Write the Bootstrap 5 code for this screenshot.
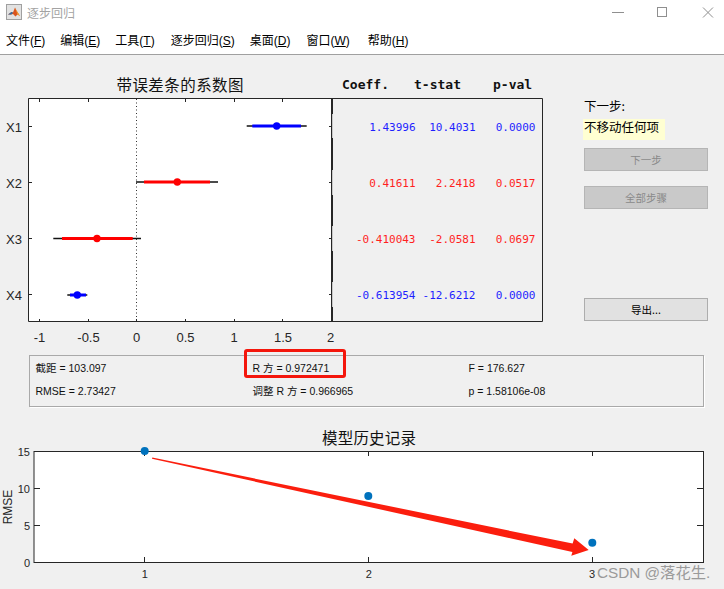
<!DOCTYPE html>
<html lang="zh">
<head>
<meta charset="utf-8">
<title>逐步回归</title>
<link href="https://cdn.jsdelivr.net/npm/bootstrap@5.3.0/dist/css/bootstrap.min.css" rel="stylesheet">
<style>
html,body{height:100%;}
body{margin:0;background:#f0f0f0;color:#000;font-family:"Liberation Sans","Noto Sans CJK SC",sans-serif;overflow:hidden;}
.win-title{height:31px;background:#fff;padding-left:6px;font-size:12px;color:#a3a3a3;font-family:"Noto Sans CJK SC",sans-serif;}
.win-icon{margin-top:4px;}
.win-name{line-height:17px;padding-top:4px;margin-left:5px;}
.win-ctls{margin-right:4px;}
.win-menu{height:24px;background:#fff;border-bottom:1px solid #a0a0a0;padding-left:6px;gap:15px;font-size:12px;font-family:"Liberation Sans","Noto Sans CJK SC",sans-serif;line-height:20px;}
.win-menu span u{text-underline-offset:1px;}
.win-menu .gap-a{margin-left:1px;}
.win-menu .gap-b{margin-left:3px;}
.work{position:relative;height:534px;}
.top-row{height:295px;}
.side{width:124px;margin-left:39px;padding-top:41px;font-family:"Noto Sans CJK SC",sans-serif;}
.next-lbl{font-size:12.5px;line-height:20px;height:23px;}
.next-val{font-size:12.5px;line-height:16px;background:#ffffd2;margin-left:-1px;padding-left:1px;width:82px;height:21px;margin-bottom:8px;}
.act{width:124px;height:23px;padding:0;font-size:10.5px;line-height:21px;border:1px solid #adadad;border-radius:0;background:#e1e1e1;color:#000;font-family:"Noto Sans CJK SC",sans-serif;}
.act.act-off,.act.act-off:disabled{background:#c9c9c9;color:#8a8a8a;border-color:#b5b5b5;opacity:1;margin-bottom:15px;}
.act-last{margin-top:74px;}
.stats{margin:5px 0 0 28.5px;width:675px;height:52px;border:1px solid #a9a9a9;box-shadow:1px 1px 0 #fff;display:grid;grid-template-columns:217px 216px 1fr;grid-auto-rows:23px;padding:0 0 3px 6px;align-content:center;font-size:10.5px;line-height:23px;color:#111;}
svg{display:block;}
svg text{font-family:"Liberation Sans",sans-serif;fill:#262626;}
svg .ttl{font-family:"Noto Sans CJK SC",sans-serif;font-size:15.5px;fill:#111;font-weight:400;}
svg .tick{font-size:13px;}
svg .tick2{font-size:11px;}
svg .hdr{font-family:"DejaVu Sans Mono",monospace;font-size:13px;font-weight:700;fill:#111;}
svg .val{font-family:"DejaVu Sans Mono",monospace;font-size:11px;}
svg .blu{fill:#1f1fff;}
svg .rd{fill:#ff1f1f;}
.mark-box{position:absolute;left:244px;top:294px;width:102px;height:29px;border:3px solid #f4160c;border-radius:3px;pointer-events:none;}
.wmark{position:absolute;left:597px;top:508px;font-size:15.3px;line-height:20px;color:#9a9a9a;white-space:nowrap;font-family:"Liberation Sans","Noto Sans CJK SC",sans-serif;}
</style>
</head>
<body>
<header class="win-title d-flex align-items-start">
  <svg width="16" height="16" viewBox="0 0 16 16" class="win-icon flex-shrink-0">
    <rect x=".5" y=".5" width="15" height="15" fill="#e2e2e2" stroke="#a0a0a0"/>
    <path d="M2 10.5 L5.5 8 L7 8.5 L9 3.5 L10.5 6.5 L14 12 L11.5 10.5 L9.5 12.5 L7 10 L5 10.5 Z" fill="#d9541e"/>
    <path d="M2 10.5 L5.5 8 L7 8.5 L6 10 L5 10.5 Z" fill="#2f6fa8"/>
    <path d="M9 3.5 L10.5 6.5 L14 12 L11.5 10.5 Z" fill="#f0a030"/>
  </svg>
  <span class="win-name flex-grow-1">逐步回归</span>
  <div class="win-ctls d-flex">
    <svg width="46" height="31" viewBox="0 0 46 31"><path d="M5 12.5H17" stroke="#8f8f8f"/></svg>
    <svg width="46" height="31" viewBox="0 0 46 31"><rect x="4.5" y="7.5" width="9" height="9" fill="none" stroke="#8f8f8f"/></svg>
    <svg width="21" height="31" viewBox="0 0 21 31"><path d="M4 7.5L14 17.5M14 7.5L4 17.5" stroke="#8f8f8f"/></svg>
  </div>
</header>
<nav class="win-menu d-flex align-items-start">
  <span>文件(<u>F</u>)</span><span>编辑(<u>E</u>)</span><span>工具(<u>T</u>)</span><span class="gap-a">逐步回归(<u>S</u>)</span><span>桌面(<u>D</u>)</span><span class="gap-a">窗口(<u>W</u>)</span><span class="gap-b">帮助(<u>H</u>)</span>
</nav>
<main class="work">
  <div class="top-row d-flex">
    <svg width="545" height="295" viewBox="0 55 545 295" class="flex-shrink-0">
      <text class="ttl" x="180" y="91" text-anchor="middle" textLength="127">带误差条的系数图</text>
      <text class="hdr" x="342" y="89">Coeff.</text>
      <text class="hdr" x="414" y="89">t-stat</text>
      <text class="hdr" x="493" y="89">p-val</text>
      <rect x="28.5" y="98.5" width="303.5" height="223" fill="#fff"/>
      <path d="M136.5 99V322" stroke="#333" stroke-dasharray="1 2.5"/>
      <g stroke="#262626" fill="none">
        <path d="M39.5 99v3M88.5 99v3M185.5 99v3M234.5 99v3M282.5 99v3"/>
        <path d="M39.5 322v-3M88.5 322v-3M136.5 322v-3M185.5 322v-3M234.5 322v-3M282.5 322v-3"/>
        <path d="M29 126.5h3M29 182.5h3M29 238.5h3M29 294.5h3M332 126.5h-3M332 182.5h-3M332 238.5h-3M332 294.5h-3"/>
        <path d="M28.5 98.5H542.5V321.5H28.5Z"/>
        <path d="M332 98.5V321.5" stroke-width="2"/>
      </g>
      <path d="M332.5 114v24M332.5 170v25M332.5 226v25M332.5 282v25" stroke="#c8c8c8"/>
      <g stroke-width="1.4" stroke="#111">
        <path d="M246.7 126H306.7M136 182H218M53.3 238.5H141M67.3 295H87.3"/>
      </g>
      <g stroke-width="3">
        <path d="M252.3 126H301M70 295H86" stroke="#0000ff"/>
        <path d="M144 182H210M62 238.5H132.7" stroke="#ff0000"/>
      </g>
      <circle cx="276.7" cy="126" r="3.7" fill="#0000ff"/>
      <circle cx="177.3" cy="182" r="3.7" fill="#ff0000"/>
      <circle cx="97" cy="238.5" r="3.7" fill="#ff0000"/>
      <circle cx="77.3" cy="295" r="3.7" fill="#0000ff"/>
      <g>
        <text class="tick" x="6" y="131.5">X1</text>
        <text class="tick" x="6" y="187.5">X2</text>
        <text class="tick" x="6" y="243.5">X3</text>
        <text class="tick" x="6" y="299.5">X4</text>
      </g>
      <g text-anchor="middle">
        <text class="tick" x="39.5" y="342">-1</text>
        <text class="tick" x="88.5" y="342">-0.5</text>
        <text class="tick" x="136.5" y="342">0</text>
        <text class="tick" x="185.5" y="342">0.5</text>
        <text class="tick" x="234" y="342">1</text>
        <text class="tick" x="283" y="342">1.5</text>
        <text class="tick" x="330.5" y="342">2</text>
      </g>
      <g text-anchor="end">
        <text class="val blu" x="415.5" y="130.5">1.43996</text>
        <text class="val blu" x="475.5" y="130.5">10.4031</text>
        <text class="val blu" x="535.5" y="130.5">0.0000</text>
        <text class="val rd" x="415.5" y="186.5">0.41611</text>
        <text class="val rd" x="475.5" y="186.5">2.2418</text>
        <text class="val rd" x="535.5" y="186.5">0.0517</text>
        <text class="val rd" x="415.5" y="243">-0.410043</text>
        <text class="val rd" x="475.5" y="243">-2.0581</text>
        <text class="val rd" x="535.5" y="243">0.0697</text>
        <text class="val blu" x="415.5" y="299">-0.613954</text>
        <text class="val blu" x="475.5" y="299">-12.6212</text>
        <text class="val blu" x="535.5" y="299">0.0000</text>
      </g>
    </svg>
    <aside class="side d-flex flex-column">
      <div class="next-lbl">下一步:</div>
      <div class="next-val">不移动任何项</div>
      <button type="button" class="btn act act-off" disabled>下一步</button>
      <button type="button" class="btn act act-off" disabled>全部步骤</button>
      <button type="button" class="btn act act-last">导出...</button>
    </aside>
  </div>
  <section class="stats">
    <div>截距 = 103.097</div><div>R 方 = 0.972471</div><div>F = 176.627</div>
    <div>RMSE = 2.73427</div><div>调整 R 方 = 0.966965</div><div>p = 1.58106e-08</div>
  </section>
  <svg width="724" height="182" viewBox="0 407 724 182">
    <text class="ttl" x="369" y="444" text-anchor="middle" textLength="94">模型历史记录</text>
    <rect x="34" y="451.5" width="669.5" height="111" fill="#fff" stroke="#262626"/>
    <g stroke="#262626" fill="none">
      <path d="M144.5 451v5M368.5 451v5M592.5 451v5M144.5 562v-5M368.5 562v-5M592.5 562v-5"/>
      <path d="M34 488.5h6M34 525.5h6M703 488.5h-6M703 525.5h-6"/>
    </g>
    <g fill="#0072bd">
      <circle cx="144.7" cy="451" r="4"/>
      <circle cx="368.3" cy="496" r="4"/>
      <circle cx="592.3" cy="542.7" r="4"/>
    </g>
    <polygon points="152.3,457.6 572.6,543.6 574.3,538.3 588.7,550 571.3,555.7 572.4,552 152,458.8" fill="#fb1e0e"/>
    <g text-anchor="end">
      <text class="tick2" x="30" y="456">15</text>
      <text class="tick2" x="30" y="493">10</text>
      <text class="tick2" x="30" y="530">5</text>
      <text class="tick2" x="30" y="566.5">0</text>
    </g>
    <g text-anchor="middle">
      <text class="tick2" x="144.7" y="578">1</text>
      <text class="tick2" x="368.8" y="578">2</text>
      <text class="tick2" x="592" y="578">3</text>
      <text x="12" y="507" font-size="12" transform="rotate(-90 12 507)">RMSE</text>
    </g>
  </svg>
  <div class="mark-box"></div>
  <div class="wmark">CSDN @落花生.</div>
</main>
</body>
</html>
